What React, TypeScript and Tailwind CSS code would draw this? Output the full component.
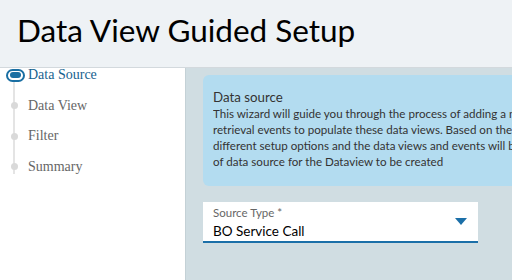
const steps = ['Data Source', 'Data View', 'Filter', 'Summary'];

export default function App() {
  return (
    <div className="w-[512px] h-[280px] overflow-hidden flex flex-col bg-[#d0dde2] font-['Lato',sans-serif]">
      <header className="h-[68px] shrink-0 bg-[#eef2f5] border-b border-[#d3d9dd] flex items-center px-[17px]">
        <h1 className="text-[31.5px] text-black leading-none pb-[6px]">Data View Guided Setup</h1>
      </header>

      <div className="flex flex-1 min-h-0">
        <aside className="w-[186px] shrink-0 bg-white border-r border-[#c4d1d6] relative">
          <div className="absolute left-[13px] top-[10px] w-[2px] h-[96px] bg-[#e4e4e4]" />
          <ul className="relative flex flex-col font-['Liberation_Serif',serif] text-[14px]">
            {steps.map((s, i) => (
              <li key={s} className="h-[30.5px] flex items-start">
                <div className="w-[28px] h-[14px] flex items-center justify-center">
                  {i === 0 ? (
                    <span className="w-[19px] h-[13px] rounded-full border-2 border-[#1a6fa3] bg-white flex items-center justify-center ml-[2px]">
                      <span className="w-[11px] h-[6px] rounded-full bg-[#1a6fa3]" />
                    </span>
                  ) : (
                    <span className="w-[7px] h-[7px] rounded-full bg-[#d9d9d9]" />
                  )}
                </div>
                <span className={i === 0 ? 'text-[#17628f] leading-[14px]' : 'text-[#666] leading-[14px]'}>{s}</span>
              </li>
            ))}
          </ul>
        </aside>

        <main className="flex-1 pl-[17px] pt-[7px]">
          <div className="w-[340px] bg-[#b3dcf0] rounded-[6px] h-[111px] pl-[10px] pt-[13px] text-[#333]">
            <div className="text-[13.3px] leading-[18px]">Data source</div>
            <p className="text-[11.6px] leading-[16px] whitespace-nowrap overflow-hidden">
              This wizard will guide you through the process of adding a new data view and<br />
              retrieval events to populate these data views. Based on the type selected you will see<br />
              different setup options and the data views and events will be created from the type<br />
              of data source for the Dataview to be created
            </p>
          </div>

          <div className="mt-[16px] w-[275px] h-[41px] bg-white border-b-2 border-[#1b6fa8] flex items-center pl-[10px] pr-[10px]">
            <div className="flex-1 pt-[2px]">
              <div className="text-[11.5px] leading-[14px] text-[#666]">Source Type *</div>
              <div className="text-[13.5px] leading-[18px] mt-[2px] text-black">BO Service Call</div>
            </div>
            <svg width="12" height="7" viewBox="0 0 12 7" className="mr-[1px]">
              <path d="M0 0h12L6 7z" fill="#1b6fa8" />
            </svg>
          </div>
        </main>
      </div>
    </div>
  );
}
